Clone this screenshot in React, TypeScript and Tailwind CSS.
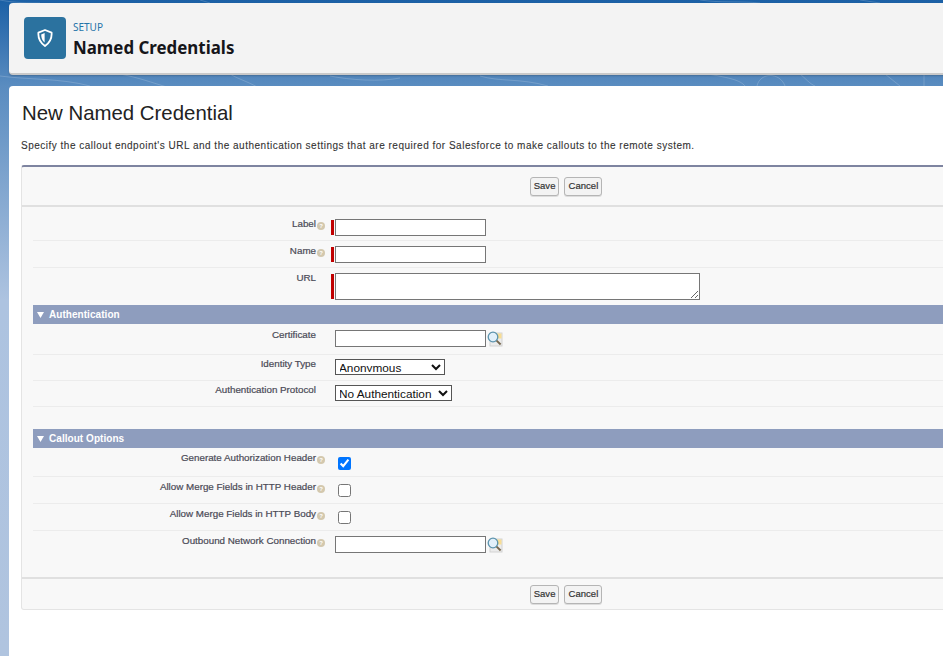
import type { ReactNode } from 'react';

function HelpIcon() {
  return (
    <span className="mt-[3px] ml-px flex h-[8px] w-[8px] items-center justify-center rounded-full bg-[#d3c8ae] text-[6px] leading-none font-bold text-white">
      ?
    </span>
  );
}

function LookupIcon() {
  return (
    <svg width="16" height="16" viewBox="0 0 16 16" className="mt-px ml-px shrink-0">
      <rect x="3" y="2" width="12" height="13" fill="#ececec" stroke="#d2d2d2" strokeWidth="1" />
      <rect x="8" y="2.5" width="6.5" height="5" fill="#f8dd94" />
      <circle cx="6" cy="6" r="4.8" fill="#e2f0fa" stroke="#5b93ad" strokeWidth="1.3" />
      <path d="M9.6 9.6 L13.6 13.4" stroke="#75664e" strokeWidth="2" />
    </svg>
  );
}

function SaveCancel() {
  return (
    <div className="flex justify-center gap-[5px]">
      {['Save', 'Cancel'].map((label) => (
        <button
          key={label}
          className="h-[19px] rounded-[3px] border border-[#b5b5b5] bg-[#f3f3f3] px-[3px] text-[9.5px] text-[#333] shadow-[0_1px_0_#ddd] [font-family:'Liberation_Sans',sans-serif]"
        >
          <span className="tracking-[0.05px] [-webkit-text-stroke:0.2px_#333]">{label}</span>
        </button>
      ))}
    </div>
  );
}

function Row({
  label,
  help,
  children,
  className
}: {
  label: string;
  help?: boolean;
  children: ReactNode;
  className: string;
}) {
  return (
    <div className={`grid grid-cols-[283px_15px_1fr] border-[#ececec] ${className}`}>
      <div className="-mt-px text-right text-[9.8px] leading-[12px] text-[#4a4a56] [-webkit-text-stroke:0.2px_#4a4a56]">
        {label}
      </div>
      <div>{help && <HelpIcon />}</div>
      <div>{children}</div>
    </div>
  );
}

function RequiredField({ children }: { children: ReactNode }) {
  return (
    <div className="flex items-stretch gap-px">
      <div className="my-px w-[3px] bg-[#c00000]" />
      {children}
    </div>
  );
}

const INPUT_CLASS = 'block h-[17px] w-[151px] border border-[#767676] bg-white';
const SELECT_CLASS =
  "block h-[16px] border border-[#555] bg-white pb-[2px] text-[11.8px] leading-none text-[#111] [text-indent:-1px] [font-family:'Liberation_Sans',sans-serif]";

function SectionHeader({ title }: { title: string }) {
  return (
    <div className="flex h-[19px] items-center gap-[5px] bg-[#8e9dbe] pl-[4px] text-[10px] font-bold text-white [font-family:'Liberation_Sans',sans-serif]">
      <svg width="7" height="6" viewBox="0 0 7 6">
        <path d="M0 0 H7 L3.5 6 Z" fill="#fff" />
      </svg>
      <span className="tracking-[0.05px]">{title}</span>
    </div>
  );
}

function BackgroundLines() {
  return (
    <svg
      className="absolute top-0 left-0"
      width="943"
      height="130"
      viewBox="0 0 943 130"
      fill="none"
      stroke="#ffffff"
      strokeOpacity="0.18"
      strokeWidth="1"
    >
      <path d="M0 76 C30 80 60 78 90 86" />
      <path d="M120 74 C140 78 150 82 170 88" />
      <path d="M230 74 C240 80 250 82 262 90" />
      <path d="M330 76 C350 80 380 82 400 78" />
      <path d="M480 76 C500 82 520 78 548 86" />
      <path d="M708 74 C730 78 740 80 745 86" />
      <path d="M757 86 C760 72 780 72 785 86" />
      <path d="M800 74 C805 78 810 84 815 86" />
      <path d="M885 74 C890 78 895 82 900 86" />
      <path d="M924 74 V86" />
      <path d="M0 0 C10 2 20 3 40 3 M200 0 L210 3 M700 0 C720 3 740 1 760 3 M860 0 L880 3" />
    </svg>
  );
}

export default function App() {
  return (
    <div className="relative h-[656px] w-[943px] overflow-hidden bg-[linear-gradient(180deg,#1b60a6_0px,#5a8cc0_86px,#adc3e0_300px,#b0c4df_656px)] [font-family:'Liberation_Sans',Arial,sans-serif]">
      <BackgroundLines />
      <div className="relative pt-[3px] pl-[9px]">
        <div className="flex h-[72px] w-[1000px] items-center rounded-[4px] border-b-2 border-[#c9c9c9] bg-[#f3f3f3] pl-[15px] shadow-[0_1px_2px_rgba(0,0,0,0.2)]">
          <div className="flex h-[42px] w-[42px] items-center justify-center rounded-[4px] bg-[#2b729f]">
            <svg width="16" height="18" viewBox="0 0 16 18" fill="none">
              <path
                d="M8 1 L14.6 3.6 C15 8.6 13 13.6 8 17 C3 13.6 1 8.6 1.4 3.6 Z"
                stroke="#fff"
                strokeWidth="1.8"
                strokeLinejoin="round"
              />
              <path d="M7.6 4 V13.6 C5.4 11.6 4.2 9 4.2 5.4 Z" fill="#fff" />
            </svg>
          </div>
          <div className="ml-[7px] pt-[4px] [font-family:'Noto_Sans',sans-serif]">
            <div className="text-[10px] leading-[14px] text-[#2574a9]">SETUP</div>
            <div className="text-[16.9px] leading-[27px] font-bold text-[#16161a]">Named Credentials</div>
          </div>
        </div>
      </div>

      <div className="relative mt-[11px] ml-[9px] h-[570px] w-[1000px] rounded-t-[4px] bg-white pt-[12px] pl-[12px]">
        <h1 className="pl-px text-[20.4px] leading-[30px] text-[#222]">New Named Credential</h1>
        <p className="mt-[11px] text-[10px] leading-[14px] tracking-[0.5px] text-[#333] [-webkit-text-stroke:0.1px_#333]">
          Specify the callout endpoint's URL and the authentication settings that are required for Salesforce to make
          callouts to the remote system.
        </p>

        <div className="mt-[12px] w-[1090px] rounded-[3px] border border-t-2 border-[#e4e4e4] border-t-[#7e84a0] bg-[#f8f8f8]">
          <div className="border-b-2 border-[#e0e0e0] pt-[10px] pb-[9px]">
            <SaveCancel />
          </div>

          <div className="pt-[7px] pl-[11px]">
            <Row label="Label" help className="border-b pt-[5px] pb-[4px]">
              <RequiredField>
                <input className={INPUT_CLASS} />
              </RequiredField>
            </Row>
            <Row label="Name" help className="border-b pt-[5px] pb-[4px]">
              <RequiredField>
                <input className={INPUT_CLASS} />
              </RequiredField>
            </Row>
            <Row label="URL" className="pt-[5px] pb-[5px]">
              <RequiredField>
                <textarea className="block h-[27px] w-[365px] border border-[#767676] bg-white" />
              </RequiredField>
            </Row>

            <SectionHeader title="Authentication" />
            <Row label="Certificate" className="border-b pt-[6px] pb-[7px]">
              <div className="flex pl-[4px]">
                <input className={INPUT_CLASS} />
                <LookupIcon />
              </div>
            </Row>
            <Row label="Identity Type" className="border-b pt-[4px] pb-[5px]">
              <div className="pl-[4px]">
                <select className={`${SELECT_CLASS} w-[110px]`} defaultValue="Anonymous">
                  <option>Anonymous</option>
                </select>
              </div>
            </Row>
            <Row label="Authentication Protocol" className="border-b pt-[4px] pb-[5px]">
              <div className="pl-[4px]">
                <select className={`${SELECT_CLASS} w-[117px]`} defaultValue="No Authentication">
                  <option>No Authentication</option>
                </select>
              </div>
            </Row>

            <div className="mt-[22px]">
              <SectionHeader title="Callout Options" />
            </div>
            <Row label="Generate Authorization Header" help className="h-[29px] border-b pt-[5px]">
              <input type="checkbox" defaultChecked className="mt-[4px] ml-[7px] block h-[13px] w-[13px]" />
            </Row>
            <Row label="Allow Merge Fields in HTTP Header" help className="h-[27px] border-b pt-[5px]">
              <input type="checkbox" className="mt-[2px] ml-[7px] block h-[13px] w-[13px]" />
            </Row>
            <Row label="Allow Merge Fields in HTTP Body" help className="h-[27px] border-b pt-[5px]">
              <input type="checkbox" className="mt-[2px] ml-[7px] block h-[13px] w-[13px]" />
            </Row>
            <Row label="Outbound Network Connection" help className="h-[46px] pt-[5px]">
              <div className="flex pl-[4px]">
                <input className={INPUT_CLASS} />
                <LookupIcon />
              </div>
            </Row>
          </div>

          <div className="border-t-2 border-[#e0e0e0] pt-[6px] pb-[5px]">
            <SaveCancel />
          </div>
        </div>
      </div>
    </div>
  );
}
